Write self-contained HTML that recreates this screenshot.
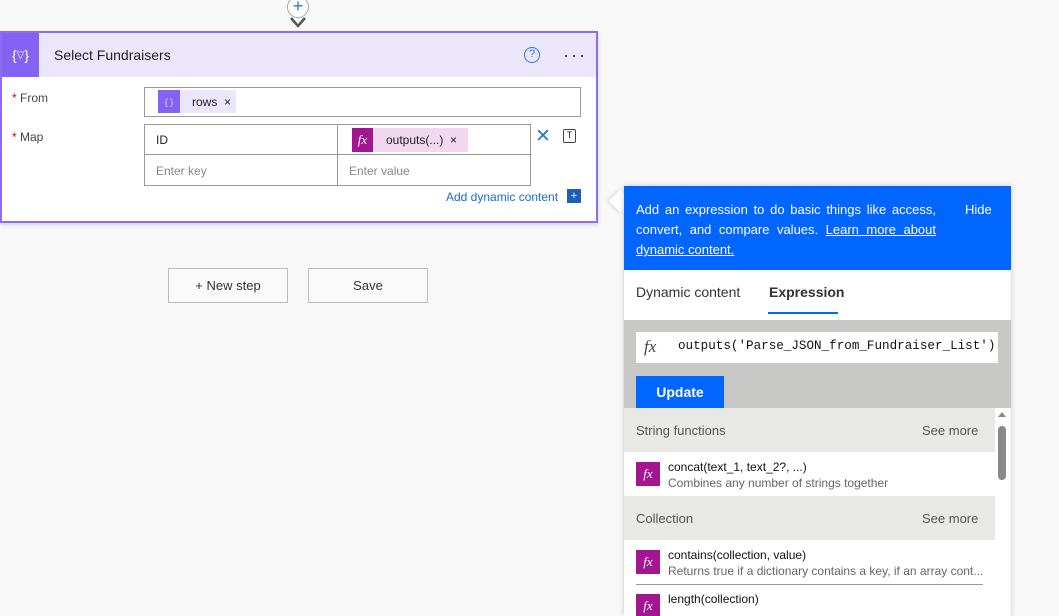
<!DOCTYPE html>
<html><head><style>
*{box-sizing:border-box;margin:0;padding:0}
body{width:1059px;height:607px;overflow:hidden;background:#f8f8f8;font-family:"Liberation Sans",sans-serif;position:relative;font-size:13px;color:#222}
.a{position:absolute}
.fx{background:#a4168f;color:#fff;font-family:"Liberation Serif",serif;font-style:italic;font-size:13px;display:flex;align-items:center;justify-content:center}
</style></head><body>
<div class="a" style="left:287px;top:-4px;width:22px;height:22px;border:1px solid #aaa;border-radius:50%;background:#fff;color:#2a7ad6;font-size:18px;line-height:18px;text-align:center">+</div>
<svg class="a" style="left:289px;top:16px" width="18" height="14"><path d="M2 2 L9 10 L16 2" stroke="#555" stroke-width="2.5" fill="none"/></svg>
<div class="a" style="left:612px;top:193px;width:16px;height:16px;background:#fff;transform:rotate(45deg);box-shadow:-1px 1px 3px rgba(0,0,0,.15)"></div>
<div class="a" style="left:0;top:31px;width:598px;height:192px;border:2px solid #8d6cf0;background:#fff;box-shadow:0 2px 4px rgba(0,0,0,.15)">
 <div class="a" style="left:0;top:0;width:594px;height:44px;background:#ece6fd"></div>
 <div class="a" style="left:0;top:0;width:37px;height:44px;background:#8463f4;color:#fff;font-size:14px;display:flex;align-items:center;justify-content:center">{<span style="font-size:10px">&#9661;</span>}</div>
 <div class="a" style="left:52px;top:14px;font-size:14px;color:#222">Select Fundraisers</div>
 <div class="a" style="left:522px;top:14px;width:16px;height:16px;border:1.5px solid #2a7ad6;border-radius:50%;color:#2a7ad6;font-size:11px;line-height:13px;text-align:center">?</div>
 <div class="a" style="left:561px;top:12px;font-size:18px;letter-spacing:2px;color:#333">···</div>
 <div class="a" style="left:10px;top:58px;font-size:12px;color:#444"><span style="color:#d00">*</span> From</div>
 <div class="a" style="left:10px;top:97px;font-size:12px;color:#444"><span style="color:#d00">*</span> Map</div>
 <div class="a" style="left:142px;top:54px;width:437px;height:30px;border:1px solid #999"></div>
 <div class="a" style="left:156px;top:57px;width:78px;height:23px;background:#ece6fd"></div>
 <div class="a" style="left:156px;top:57px;width:22px;height:23px;background:#8463f4;color:#ddd;font-size:9px;display:flex;align-items:center;justify-content:center">{ }</div>
 <div class="a" style="left:190px;top:62px;font-size:12px">rows &nbsp;×</div>
 <div class="a" style="left:142px;top:91px;width:387px;height:62px;border:1px solid #999"></div>
 <div class="a" style="left:142px;top:121px;width:387px;height:1px;background:#999"></div>
 <div class="a" style="left:335px;top:91px;width:1px;height:62px;background:#999"></div>
 <div class="a" style="left:154px;top:100px;font-size:12px">ID</div>
 <div class="a" style="left:154px;top:131px;font-size:12px;color:#888">Enter key</div>
 <div class="a" style="left:347px;top:131px;font-size:12px;color:#888">Enter value</div>
 <div class="a" style="left:350px;top:95px;width:116px;height:24px;background:#f2d8ee"></div>
 <div class="a fx" style="left:350px;top:95px;width:21px;height:24px">fx</div>
 <div class="a" style="left:384px;top:100px;font-size:12px">outputs(...) &nbsp;×</div>
 <div class="a" style="left:533px;top:94px;font-size:19px;color:#2a7ad6;line-height:20px">✕</div>
 <div class="a" style="left:561px;top:96px;width:13px;height:14px;border:1.5px solid #444;border-radius:2px;font-size:9px;text-align:center;line-height:11px">T</div>
 <div class="a" style="left:444px;top:157px;font-size:12px;color:#1a6ad6">Add dynamic content</div>
 <div class="a" style="left:565px;top:156px;width:14px;height:14px;background:#1b5fb8;color:#fff;font-size:11px;line-height:14px;text-align:center">+</div>
</div>
<div class="a" style="left:168px;top:268px;width:120px;height:35px;border:1px solid #bbb;background:#fafafa;font-size:13px;text-align:center;line-height:33px;color:#333">+ New step</div>
<div class="a" style="left:308px;top:268px;width:120px;height:35px;border:1px solid #bbb;background:#fafafa;font-size:13px;text-align:center;line-height:33px;color:#333">Save</div>
<div class="a" style="left:624px;top:186px;width:387px;height:430px;background:#fff;box-shadow:0 0 5px rgba(0,0,0,.2);overflow:hidden">
 <div class="a" style="left:0;top:0;width:387px;height:84px;background:#0066ff;color:#fff"></div>
 <div class="a" style="left:12px;top:14px;width:300px;color:#fff;font-size:13px;line-height:20px;text-align:justify">Add an expression to do basic things like access, convert, and compare values. <u>Learn more about dynamic content.</u></div>
 <div class="a" style="left:341px;top:16px;color:#fff;font-size:13px">Hide</div>
 <div class="a" style="left:12px;top:98px;font-size:14px;color:#333">Dynamic content</div>
 <div class="a" style="left:145px;top:98px;font-size:14px;color:#333;font-weight:bold">Expression</div>
 <div class="a" style="left:144px;top:126px;width:70px;height:2px;background:#0066ff"></div>
 <div class="a" style="left:0;top:134px;width:387px;height:88px;background:#c8c9c6"></div>
 <div class="a" style="left:12px;top:146px;width:362px;height:31px;background:#fff;overflow:hidden;white-space:nowrap">
  <span class="a" style="left:8px;top:5px;font-family:'Liberation Serif',serif;font-style:italic;font-size:17px;color:#444">fx</span>
  <span class="a" style="left:42px;top:7px;font-family:'Liberation Mono',monospace;font-size:12.6px;color:#111">outputs('Parse_JSON_from_Fundraiser_List')</span>
 </div>
 <div class="a" style="left:12px;top:190px;width:88px;height:32px;background:#0066ff;color:#fff;font-weight:bold;font-size:14px;text-align:center;line-height:32px">Update</div>
 <div class="a" style="left:0;top:222px;width:371px;height:44px;background:#e8e9e7"></div>
 <div class="a" style="left:12px;top:237px;color:#555;font-size:13px">String functions</div>
 <div class="a" style="left:298px;top:237px;color:#555;font-size:13px">See more</div>
 <div class="a fx" style="left:12px;top:276px;width:24px;height:24px">fx</div>
 <div class="a" style="left:44px;top:274px;font-size:12px;color:#111">concat(text_1, text_2?, ...)</div>
 <div class="a" style="left:44px;top:290px;font-size:12px;color:#666">Combines any number of strings together</div>
 <div class="a" style="left:0;top:310px;width:371px;height:44px;background:#e8e9e7"></div>
 <div class="a" style="left:12px;top:325px;color:#555;font-size:13px">Collection</div>
 <div class="a" style="left:298px;top:325px;color:#555;font-size:13px">See more</div>
 <div class="a fx" style="left:12px;top:364px;width:24px;height:24px">fx</div>
 <div class="a" style="left:44px;top:362px;font-size:12px;color:#111">contains(collection, value)</div>
 <div class="a" style="left:44px;top:378px;font-size:12px;color:#666">Returns true if a dictionary contains a key, if an array cont...</div>
 <div class="a" style="left:12px;top:398px;width:347px;height:1px;background:#999"></div>
 <div class="a fx" style="left:12px;top:408px;width:24px;height:24px">fx</div>
 <div class="a" style="left:44px;top:406px;font-size:12px;color:#111">length(collection)</div>
 <div class="a" style="left:374px;top:226px;width:0;height:0;border-left:4px solid transparent;border-right:4px solid transparent;border-bottom:5px solid #888"></div>
 <div class="a" style="left:374px;top:240px;width:8px;height:54px;background:#888;border-radius:4px"></div>
</div>
</body></html>
